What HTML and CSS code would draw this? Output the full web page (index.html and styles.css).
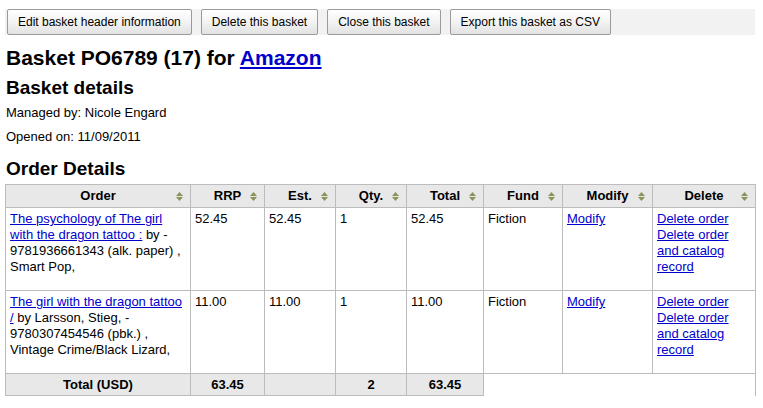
FILE: index.html
```html
<!DOCTYPE html>
<html>
<head>
<meta charset="utf-8">
<link rel="stylesheet" href="styles.css">
</head>
<body>
<div class="toolbar">
  <button class="btn">Edit basket header information</button>
  <button class="btn">Delete this basket</button>
  <button class="btn">Close this basket</button>
  <button class="btn">Export this basket as CSV</button>
</div>
<h1 class="title">Basket PO6789 (17) for <a href="#">Amazon</a></h1>
<h2 class="section">Basket details</h2>
<p class="info">Managed by: Nicole Engard</p>
<p class="info">Opened on: 11/09/2011</p>
<h2 class="section order-head">Order Details</h2>
<table class="orders">
  <colgroup>
    <col class="c-order"><col class="c-rrp"><col class="c-est"><col class="c-qty"><col class="c-total"><col class="c-fund"><col class="c-mod"><col class="c-del">
  </colgroup>
  <thead>
    <tr>
      <th>Order<span class="sort"><svg width="7" height="9" viewBox="0 0 7 9"><path d="M3.5 0 L7 4 H0 Z M0 5 H7 L3.5 9 Z" fill="#8c9358"/></svg></span></th>
      <th>RRP<span class="sort"><svg width="7" height="9" viewBox="0 0 7 9"><path d="M3.5 0 L7 4 H0 Z M0 5 H7 L3.5 9 Z" fill="#8c9358"/></svg></span></th>
      <th>Est.<span class="sort"><svg width="7" height="9" viewBox="0 0 7 9"><path d="M3.5 0 L7 4 H0 Z M0 5 H7 L3.5 9 Z" fill="#8c9358"/></svg></span></th>
      <th>Qty.<span class="sort"><svg width="7" height="9" viewBox="0 0 7 9"><path d="M3.5 0 L7 4 H0 Z M0 5 H7 L3.5 9 Z" fill="#8c9358"/></svg></span></th>
      <th>Total<span class="sort"><svg width="7" height="9" viewBox="0 0 7 9"><path d="M3.5 0 L7 4 H0 Z M0 5 H7 L3.5 9 Z" fill="#8c9358"/></svg></span></th>
      <th>Fund<span class="sort"><svg width="7" height="9" viewBox="0 0 7 9"><path d="M3.5 0 L7 4 H0 Z M0 5 H7 L3.5 9 Z" fill="#8c9358"/></svg></span></th>
      <th>Modify<span class="sort"><svg width="7" height="9" viewBox="0 0 7 9"><path d="M3.5 0 L7 4 H0 Z M0 5 H7 L3.5 9 Z" fill="#8c9358"/></svg></span></th>
      <th>Delete<span class="sort"><svg width="7" height="9" viewBox="0 0 7 9"><path d="M3.5 0 L7 4 H0 Z M0 5 H7 L3.5 9 Z" fill="#8c9358"/></svg></span></th>
    </tr>
  </thead>
  <tbody>
    <tr>
      <td><a href="#">The psychology of The girl with the dragon tattoo :</a> by - 9781936661343 (alk. paper) , Smart Pop,</td>
      <td>52.45</td>
      <td>52.45</td>
      <td>1</td>
      <td>52.45</td>
      <td>Fiction</td>
      <td><a href="#">Modify</a></td>
      <td class="del"><a href="#">Delete order</a><br><a href="#">Delete order and catalog record</a></td>
    </tr>
    <tr>
      <td><a href="#">The girl with the dragon tattoo /</a> by Larsson, Stieg, - 9780307454546 (pbk.) , Vintage Crime/Black Lizard,</td>
      <td>11.00</td>
      <td>11.00</td>
      <td>1</td>
      <td>11.00</td>
      <td>Fiction</td>
      <td><a href="#">Modify</a></td>
      <td class="del"><a href="#">Delete order</a><br><a href="#">Delete order and catalog record</a></td>
    </tr>
  </tbody>
  <tfoot>
    <tr>
      <th class="foot">Total (USD)</th>
      <th class="foot">63.45</th>
      <th class="foot"></th>
      <th class="foot">2</th>
      <th class="foot">63.45</th>
      <td class="blank" colspan="3"></td>
    </tr>
  </tfoot>
</table>
</body>
</html>
```
FILE: styles.css
```css
html, body {
  margin: 0;
  padding: 0;
  background: #fff;
}
body {
  padding: 9px 8px 0 5px;
  font-family: "Liberation Sans", Arial, sans-serif;
  font-size: 13px;
  color: #000;
}
a {
  color: #0000cc;
  text-decoration: underline;
}
.toolbar {
  display: flex;
  gap: 9px;
  width: 750px;
  height: 26px;
  box-sizing: border-box;
  padding: 0 0 0 2px;
  background: #f2f2f2;
}
.btn {
  height: 26px;
  padding: 0 10px;
  font-family: "Liberation Sans", Arial, sans-serif;
  font-size: 12px;
  color: #000;
  border: 1px solid #9a9a9a;
  border-radius: 2px;
  background: linear-gradient(#ffffff, #f3f3f3 50%, #e2e2e2);
}
.title {
  margin: 11px 0 0 1px;
  font-size: 21px;
  line-height: 24px;
  font-weight: bold;
}
.section {
  margin: 7px 0 0 1px;
  font-size: 19px;
  line-height: 22px;
  font-weight: bold;
}
.info {
  margin: 2px 0 0 1px;
  line-height: 24px;
}
.info + .info {
  margin-top: 0;
}
.order-head {
  margin-top: 9px;
}
.orders {
  margin-top: 4px;
  border-collapse: collapse;
  table-layout: fixed;
  width: 750px;
}
.c-order { width: 185px; }
.c-rrp { width: 74px; }
.c-est { width: 71px; }
.c-qty { width: 71px; }
.c-total { width: 77px; }
.c-fund { width: 79px; }
.c-mod { width: 90px; }
.c-del { width: 103px; }
.orders th, .orders td {
  border: 1px solid #bcbcbc;
}
.orders thead th {
  position: relative;
  height: 22px;
  padding: 0 4px;
  background: #e8e8e8;
  font-weight: bold;
  text-align: center;
  line-height: 16px;
}
.sort {
  position: absolute;
  right: 7px;
  top: 7px;
  width: 7px;
  height: 9px;
  display: block;
}
.sort svg { display: block; }
.orders tbody td {
  height: 60px;
  padding: 3px 4px 15px;
  vertical-align: top;
  line-height: 16px;
}
.orders tbody td.del {
  padding-right: 6px;
}
.orders tfoot .foot {
  height: 21px;
  padding: 0 4px;
  background: #e8e8e8;
  font-weight: bold;
  text-align: center;
  line-height: 16px;
}
.orders tfoot .blank {
  border-top: 1px solid #bcbcbc;
  border-left: 1px solid #bcbcbc;
  border-bottom: none;
  border-right: 1px solid #bcbcbc;
}
```
